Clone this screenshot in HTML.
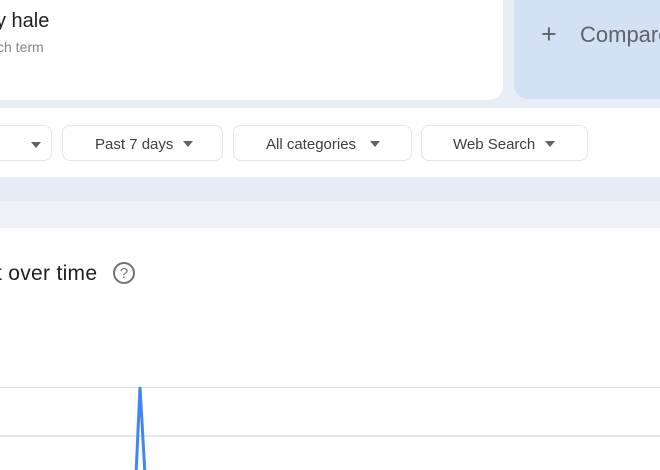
<!DOCTYPE html>
<html><head><style>
body{margin:0;width:660px;height:470px;overflow:hidden;background:#fff;font-family:"Liberation Sans",Arial,sans-serif;position:relative}
.a{position:absolute}
.btn{position:absolute;top:125px;height:36px;border:1px solid #e3e5e8;border-radius:8px;background:#fff;font-size:15px;color:#3c4043;line-height:37px;box-sizing:border-box}
.tri{display:inline-block;width:0;height:0;border-left:5px solid transparent;border-right:5px solid transparent;border-top:6px solid #5f6368;vertical-align:middle;margin-left:10px;margin-top:-2px}
</style></head><body>
<div class="a" style="left:0;top:0;width:660px;height:108px;background:#e8eef7"></div>
<div class="a" style="left:-20px;top:-20px;width:523px;height:120px;background:#fff;border-radius:0 0 14px 0"></div>
<div class="a" style="left:514px;top:-20px;width:166px;height:119px;background:#d3e1f5;border-radius:0 0 0 14px"></div>
<div class="a" style="left:-4px;top:10px;font-size:20px;color:#202124">y hale</div>
<div class="a" style="left:-3px;top:39px;font-size:14px;color:#80868b">ch term</div>
<div class="a" style="left:541px;top:19px;font-size:27px;color:#5f6368;font-weight:300">+</div>
<div class="a" style="left:580px;top:22px;font-size:22px;color:#5f6368">Compare</div>
<div class="btn" style="left:-20px;width:72px;padding-left:50px"><span class="tri" style="margin:0"></span></div>
<div class="btn" style="left:62px;width:161px;padding-left:32px">Past 7 days<span class="tri"></span></div>
<div class="btn" style="left:233px;width:179px;padding-left:32px">All categories<span class="tri" style="margin-left:14px"></span></div>
<div class="btn" style="left:421px;width:167px;padding-left:31px">Web Search<span class="tri"></span></div>
<div class="a" style="left:0;top:177px;width:660px;height:24px;background:#e6ecf6"></div>
<div class="a" style="left:0;top:201px;width:660px;height:27px;background:#eef2f8"></div>
<div class="a" style="left:-4px;top:262px;font-size:21px;color:#202124;letter-spacing:0.3px">t over time</div>
<div class="a" style="left:113px;top:262px;width:18px;height:18px;border:2px solid #707377;border-radius:50%;text-align:center;font-size:15px;line-height:19px;color:#707377">?</div>
<div class="a" style="left:0;top:387px;width:660px;height:1px;background:#e0e0e0"></div>
<div class="a" style="left:0;top:435px;width:660px;height:2px;background:#e8e8e8"></div>
<svg class="a" style="left:0;top:0" width="660" height="470"><polyline points="136,475 140,387 145,475" fill="none" stroke="#4285f4" stroke-width="3"/></svg>
</body></html>
